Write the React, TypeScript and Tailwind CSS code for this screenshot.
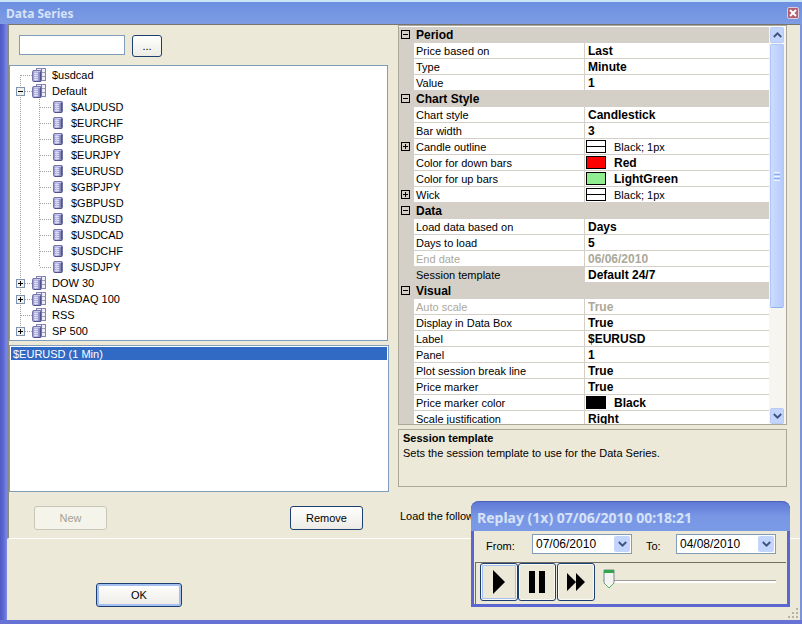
import { useState } from "react";
import clsx from "clsx";

type TreeNode = {
  name: string;
  state?: "open" | "closed";
  children?: string[];
};

type Row = {
  label: string;
  value?: string;
  heading?: boolean;
  expandable?: boolean;
  disabled?: boolean;
  selected?: boolean;
  swatch?: "line" | "red" | "green" | "black";
};

const instruments: TreeNode[] = [
  { name: "$usdcad" },
  {
    name: "Default",
    state: "open",
    children: [
      "$AUDUSD",
      "$EURCHF",
      "$EURGBP",
      "$EURJPY",
      "$EURUSD",
      "$GBPJPY",
      "$GBPUSD",
      "$NZDUSD",
      "$USDCAD",
      "$USDCHF",
      "$USDJPY",
    ],
  },
  { name: "DOW 30", state: "closed" },
  { name: "NASDAQ 100", state: "closed" },
  { name: "RSS" },
  { name: "SP 500", state: "closed" },
];

const rows: Row[] = [
  { label: "Period", heading: true },
  { label: "Price based on", value: "Last" },
  { label: "Type", value: "Minute" },
  { label: "Value", value: "1" },
  { label: "Chart Style", heading: true },
  { label: "Chart style", value: "Candlestick" },
  { label: "Bar width", value: "3" },
  { label: "Candle outline", value: "Black; 1px", expandable: true, swatch: "line" },
  { label: "Color for down bars", value: "Red", swatch: "red" },
  { label: "Color for up bars", value: "LightGreen", swatch: "green" },
  { label: "Wick", value: "Black; 1px", expandable: true, swatch: "line" },
  { label: "Data", heading: true },
  { label: "Load data based on", value: "Days" },
  { label: "Days to load", value: "5" },
  { label: "End date", value: "06/06/2010", disabled: true },
  { label: "Session template", value: "Default 24/7", selected: true },
  { label: "Visual", heading: true },
  { label: "Auto scale", value: "True", disabled: true },
  { label: "Display in Data Box", value: "True" },
  { label: "Label", value: "$EURUSD" },
  { label: "Panel", value: "1" },
  { label: "Plot session break line", value: "True" },
  { label: "Price marker", value: "True" },
  { label: "Price marker color", value: "Black", swatch: "black" },
  { label: "Scale justification", value: "Right" },
];

const dotted = { stroke: "#a0a0a0", strokeDasharray: "1 1" };

function Cylinder({ y = 0 }: { y?: number }) {
  return (
    <g transform={`translate(0 ${y})`}>
      <path
        d="M.5 1.5Q.5 .5 2 .5H8Q9.5 .5 9.5 1.5V10.5Q9.5 11.5 8 11.5H2Q.5 11.5 .5 10.5Z"
        fill="url(#cyl)"
        stroke="#7474a8"
      />
      <path d="M2 1.5H8" stroke="#c8c8e8" />
      <path d="M2 3.5H6M2 5.5H6M2 7.5H6M2 9.5H6" stroke="#e6e6fa" strokeWidth=".8" />
      <path d="M8.5 2V10.5M2 11.5H8.5" stroke="#50508c" />
    </g>
  );
}

function GroupIcon() {
  return (
    <svg width="14" height="14" viewBox="0 0 14 14" className="shrink-0">
      <rect x="4.5" y=".5" width="9" height="12" fill="#ececfa" stroke="#8484b4" />
      <path d="M5 4.5H13M9 8.5H13" stroke="#9c9cc8" />
      <path d="M9.5 1V12" stroke="#7474a8" />
      <Cylinder y={2} />
    </svg>
  );
}

function ItemIcon() {
  return (
    <svg width="10" height="12" viewBox="0 0 10 12" className="shrink-0">
      <Cylinder />
    </svg>
  );
}

function TreeToggle({ node, first, last }: { node: TreeNode; first: boolean; last: boolean }) {
  const lines = (
    <svg width="22" height="16" viewBox="0 0 22 16" shapeRendering="crispEdges">
      <path d={`M10.5 ${first ? 8 : 0}V${last ? 8 : 16}M11 8.5H22`} {...dotted} />
      {node.state && (
        <>
          <rect x="6.5" y="4.5" width="8" height="8" fill="#f1f0ea" stroke="#7f93ad" />
          <path d={node.state === "open" ? "M8 8.5H13" : "M8 8.5H13M10.5 6V11"} stroke="#000" />
        </>
      )}
    </svg>
  );

  if (!node.state) return <span>{lines}</span>;
  return (
    <button type="button" aria-label={`Toggle ${node.name}`}>
      {lines}
    </button>
  );
}

function Tree() {
  return (
    <ul className="mr-px h-[276px] overflow-hidden border border-[#7f9db9] bg-white py-px">
      {instruments.map((node, i) => (
        <li key={node.name}>
          <div className="flex h-4 items-center">
            <TreeToggle node={node} first={i === 0} last={i === instruments.length - 1} />
            <GroupIcon />
            <span className="ml-1.5">{node.name}</span>
          </div>
          {node.children && (
            <ul>
              {node.children.map((child, j) => (
                <li key={child} className="flex h-4 items-center">
                  <svg width="43" height="16" viewBox="0 0 43 16" shapeRendering="crispEdges">
                    <path
                      d={`M10.5 0V16M29.5 0V${j === node.children!.length - 1 ? 8 : 16}M30 8.5H41`}
                      {...dotted}
                    />
                  </svg>
                  <ItemIcon />
                  <span className="ml-2">{child}</span>
                </li>
              ))}
            </ul>
          )}
        </li>
      ))}
    </ul>
  );
}

function Swatch({ kind }: { kind: NonNullable<Row["swatch"]> }) {
  return (
    <span
      className={clsx(
        "mr-2 flex h-[13px] w-5 items-center border border-black",
        kind === "line" && "bg-white",
        kind === "red" && "bg-[#ff0000]",
        kind === "green" && "bg-[#90ee90]",
        kind === "black" && "bg-black"
      )}
    >
      {kind === "line" && <span className="h-px w-full bg-black" />}
    </span>
  );
}

function GridToggle({ open, label }: { open: boolean; label: string }) {
  return (
    <button type="button" aria-label={`Toggle ${label}`} className="block pl-0.5">
      <svg width="10" height="10" viewBox="0 0 10 10" shapeRendering="crispEdges">
        <rect x=".5" y=".5" width="8" height="8" fill="none" stroke="#000" />
        <path d={open ? "M2 4.5H7" : "M2 4.5H7M4.5 2V7"} stroke="#000" />
      </svg>
    </button>
  );
}

function PropertyRow({ row }: { row: Row }) {
  if (row.heading) {
    return (
      <tr className="h-4 bg-[#d4d0c8]">
        <td className="p-0">
          <GridToggle open label={row.label} />
        </td>
        <th colSpan={2} className="p-0 pl-0.5 text-left text-xs leading-[15px] font-bold">
          {row.label}
        </th>
      </tr>
    );
  }
  return (
    <tr className={clsx("h-4", row.disabled && "text-[#aca899]")}>
      <td className="bg-[#d4d0c8] p-0">
        {row.expandable && <GridToggle open={false} label={row.label} />}
      </td>
      <td
        className={clsx(
          "border-r border-b border-[#d4d0c8] p-0 pt-px pl-0.5 leading-[14px]",
          row.selected && "bg-[#d4d0c8]"
        )}
      >
        {row.label}
      </td>
      <td className="border-b border-[#d4d0c8] p-0">
        <div className={clsx("flex h-[15px] items-center", row.swatch ? "pl-px" : "pl-[3px]")}>
          {row.swatch && <Swatch kind={row.swatch} />}
          <span
            className={clsx("pt-px leading-[14px]", row.swatch !== "line" && "text-xs leading-[14px] font-bold")}
          >
            {row.value}
          </span>
        </div>
      </td>
    </tr>
  );
}

function Chevron({ up }: { up?: boolean }) {
  return (
    <svg width="9" height="6" viewBox="0 0 9 6" fill="none" stroke="#3f5680" strokeWidth="2">
      <path d={up ? "M.8 5L4.5 1.4L8.2 5" : "M.8 1L4.5 4.6L8.2 1"} />
    </svg>
  );
}

function ScrollBar() {
  return (
    <div className="flex w-[17px] shrink-0 flex-col bg-[#f6f5ef] pr-px">
      <button
        type="button"
        aria-label="Scroll up"
        className="mx-px flex h-4 items-center justify-center rounded-xs border border-[#b6cbf8] bg-[#c4d5fd]"
      >
        <Chevron up />
      </button>
      <div className="mx-px mt-px flex h-[264px] flex-col items-center justify-center gap-px rounded-xs border border-[#b0c6f8] border-b-[#8cb0f0] bg-linear-to-r from-[#cddcff] to-[#b6cbfb]">
        <span className="h-px w-1.5 bg-[#eef4fe]" />
        <span className="h-px w-1.5 bg-[#8cb0f8]" />
        <span className="h-px w-1.5 bg-[#eef4fe]" />
        <span className="h-px w-1.5 bg-[#8cb0f8]" />
        <span className="h-px w-1.5 bg-[#eef4fe]" />
      </div>
      <button
        type="button"
        aria-label="Scroll down"
        className="mx-px mt-auto flex h-4 items-center justify-center rounded-xs border border-[#b6cbf8] bg-[#c4d5fd]"
      >
        <Chevron />
      </button>
    </div>
  );
}

function PropertyGrid() {
  return (
    <div className="flex h-[400px] overflow-hidden border border-[#aca899] bg-white pt-px">
      <div className="min-w-0 flex-1 overflow-hidden">
        <table className="w-full table-fixed border-separate border-spacing-0">
          <colgroup>
            <col className="w-[15px]" />
            <col className="w-[171px]" />
            <col />
          </colgroup>
          <tbody>
            {rows.map((row) => (
              <PropertyRow key={row.label} row={row} />
            ))}
          </tbody>
        </table>
      </div>
      <ScrollBar />
    </div>
  );
}

function DatePicker({ id, label, value }: { id: string; label: string; value: string }) {
  return (
    <div className="flex items-center">
      <label htmlFor={id} className={clsx("pt-1", id === "from" ? "w-[46px]" : "w-[30px]")}>
        {label}
      </label>
      <div className="flex h-5 w-[100px] items-center border border-[#7f9db9] bg-white pr-px">
        <select id={id} className="h-full min-w-0 flex-1 appearance-none pl-[3px] text-xs outline-none">
          <option>{value}</option>
        </select>
        <span className="pointer-events-none flex h-4 w-4 items-center justify-center rounded-xs bg-[#c4d5fd]">
          <Chevron />
        </span>
      </div>
    </div>
  );
}

function ReplayWindow() {
  const [speed, setSpeed] = useState(0);
  const buttonStyle =
    "flex h-[38px] w-[38px] items-center justify-center rounded-[3px] border border-[#1d3f70] bg-[#ece9d8] inset-ring-1 inset-ring-[#fafaf5]";

  return (
    <section className="absolute right-3 bottom-[13px] w-[319px] rounded-t-lg border-x-3 border-b-3 border-[#5c66d0] bg-[#ece9d8]">
      <header className="-mx-[3px] flex h-[30px] items-center rounded-t-lg border-t border-[#4a5fb8] bg-linear-to-b from-[#6079d6] via-[#7896e4] to-[#7b9ae6] pt-0.5 pl-1.5 font-['Noto_Sans'] text-sm font-bold text-[#d6e2f8]">
        Replay (1x) 07/06/2010 00:18:21
      </header>
      <div className="flex h-[31px] justify-between pt-[3px] pr-[11px] pb-2 pl-3">
        <DatePicker id="from" label="From:" value="07/06/2010" />
        <DatePicker id="to" label="To:" value="04/08/2010" />
      </div>
      <div className="mx-px flex h-[42px] border-t border-l border-[#716f64] pl-1">
        <button
          type="button"
          aria-label="Play"
          className={clsx(buttonStyle, "ring-2 ring-[#a4c0f0] ring-inset")}
        >
          <svg width="14" height="24" viewBox="0 0 14 24">
            <path d="M1 0L13 12L1 24Z" />
          </svg>
        </button>
        <button type="button" aria-label="Pause" className={buttonStyle}>
          <svg width="18" height="22" viewBox="0 0 18 22">
            <path d="M1 0H7V22H1ZM11 0H17V22H11Z" />
          </svg>
        </button>
        <button type="button" aria-label="Fast forward" className={clsx(buttonStyle, "ml-px")}>
          <svg width="20" height="18" viewBox="0 0 20 18">
            <path d="M1 0L10 9L1 18ZM10 0L19 9L10 18Z" />
          </svg>
        </button>
        <div className="relative mr-2.5 ml-2 flex h-9 flex-1 items-center">
          <input
            type="range"
            aria-label="Replay speed"
            min={0}
            max={100}
            value={speed}
            onChange={(e) => setSpeed(Number(e.target.value))}
            className="h-[3px] w-full appearance-none border-t border-[#9d9c99] bg-white [&::-webkit-slider-thumb]:h-5 [&::-webkit-slider-thumb]:w-3 [&::-webkit-slider-thumb]:appearance-none"
          />
          <svg
            width="12"
            height="20"
            viewBox="0 0 12 20"
            className="pointer-events-none absolute top-1.5"
            style={{ left: `${speed * 0.93}%` }}
          >
            <path d="M1 1H11V14L6 19L1 14Z" fill="#f3f3ef" stroke="#778892" />
            <path d="M1 1H11V4H1Z" fill="#2fa84a" />
            <path d="M1.5 14.5L6 19L10.5 14.5" fill="none" stroke="#5fae6c" />
          </svg>
        </div>
      </div>
    </section>
  );
}

export default function App() {
  return (
    <main className="relative flex min-h-screen flex-col border-t-2 border-b-4 border-t-[#cbe6f5] border-b-[#6673d4] bg-[#5f6ad0] font-['Liberation_Sans',sans-serif] text-[11px] leading-4 text-black">
      <header className="flex h-[22px] items-center justify-between bg-linear-to-b from-[#6c8fe0] to-[#7e9ce4] pr-[3px] pl-1.5">
        <h1 className="pt-0.5 font-['Noto_Sans'] text-xs font-bold text-[#d6e2f8]">Data Series</h1>
        <button
          type="button"
          aria-label="Close"
          className="flex h-3 w-3 items-center justify-center rounded-xs border border-[#dccbe0] bg-[#b0606e]"
        >
          <svg width="8" height="8" viewBox="0 0 8 8" stroke="#fff" strokeWidth="2">
            <path d="M1 1L7 7M7 1L1 7" />
          </svg>
        </button>
      </header>

      <div className="flex flex-1 border-r-2 border-[#7d93d8] bg-[#ece9d8]">
        <div className="w-[7px] bg-linear-to-r from-[#4f59c4] via-[#5f69d4] to-[#7c8ce4]" />
        <div className="flex min-w-0 flex-1 flex-col">
          <div className="grid grid-cols-[380fr_389fr] gap-x-[9px] border-t border-b border-l-2 border-t-[#77756c] border-b-white border-l-[#8c8a7c] pr-[13px]">
            <div>
              <div className="flex h-10 gap-[7px] pt-2.5 pl-2.5">
                <input
                  type="text"
                  aria-label="Instrument"
                  className="h-5 w-[106px] border border-[#7f9db9] bg-white px-1"
                />
                <button
                  type="button"
                  aria-label="Browse instruments"
                  className="h-[22px] w-[30px] rounded-[3px] border border-[#1d3f70] bg-linear-to-b from-white to-[#ecebe5]"
                >
                  ...
                </button>
              </div>
              <Tree />
              <ul className="mt-1 h-[147px] border border-[#7f9db9] bg-white p-px">
                <li className="h-[13px] bg-[#316ac5] pl-0.5 leading-[14px] text-white">$EURUSD (1 Min)</li>
              </ul>
              <div className="flex h-[46px] items-start justify-between pt-3.5 pr-[26px] pl-[25px]">
                <button
                  type="button"
                  disabled
                  className="h-6 w-[73px] rounded-[3px] border border-[#c9c7ba] bg-[#f5f4ea] text-[#a1a192]"
                >
                  New
                </button>
                <button
                  type="button"
                  className="h-6 w-[73px] rounded-[3px] border border-[#1d3f70] bg-linear-to-b from-white to-[#ecebe5]"
                >
                  Remove
                </button>
              </div>
            </div>

            <div>
              <PropertyGrid />
              <div className="mt-1 h-[58px] border border-[#aca899] px-1 pt-px">
                <h2 className="leading-[15px] font-bold">Session template</h2>
                <p className="leading-[14px]">Sets the session template to use for the Data Series.</p>
              </div>
              <p className="mt-[21px] ml-0.5 w-[71px] overflow-hidden whitespace-nowrap">Load the follow</p>
            </div>
          </div>

          <footer className="flex flex-1 items-start pt-11 pl-[89px]">
            <button
              type="button"
              className="h-6 w-[86px] rounded-[3px] border border-[#1d3f70] bg-linear-to-b from-white to-[#ecebe5] ring-2 ring-[#a4c0f0] ring-inset"
            >
              OK
            </button>
            <svg
              width="12"
              height="12"
              viewBox="0 0 12 12"
              fill="#b8b4a2"
              className="ml-auto self-end"
              aria-hidden="true"
            >
              <path d="M8 0h2v2h-2zM4 4h2v2h-2zM8 4h2v2h-2zM0 8h2v2h-2zM4 8h2v2h-2zM8 8h2v2h-2z" />
            </svg>
          </footer>
        </div>
      </div>

      <svg width="0" height="0" className="absolute" aria-hidden="true">
        <linearGradient id="cyl">
          <stop offset="0" stopColor="#8c8cc4" />
          <stop offset=".35" stopColor="#c4c4ea" />
          <stop offset="1" stopColor="#6c6ca6" />
        </linearGradient>
      </svg>
      <ReplayWindow />
    </main>
  );
}
